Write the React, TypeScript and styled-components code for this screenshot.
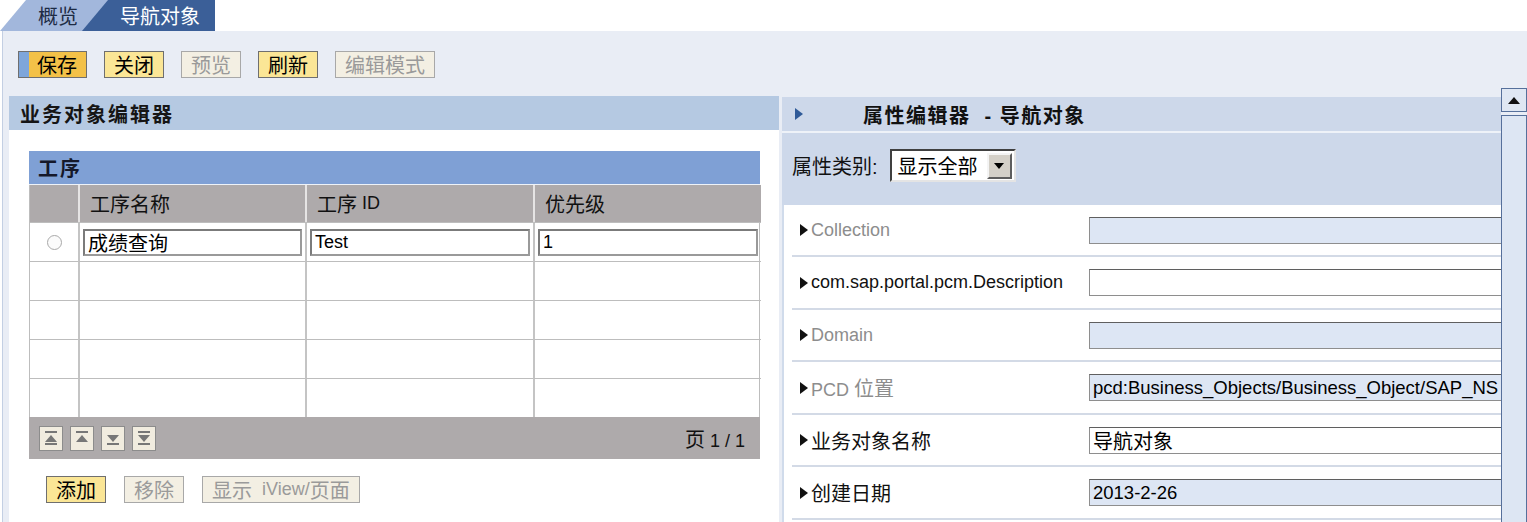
import React from 'react'
import styled, { createGlobalStyle, css } from 'styled-components'

const sans = `"Liberation Sans", "Noto Sans CJK SC", sans-serif`

const GlobalStyle = createGlobalStyle`
	html, body {
		margin: 0;
		padding: 0;
		background: #fff;
	}
	body {
		font-family: ${sans};
		color: #000;
	}
	* {
		box-sizing: border-box;
	}
`

// chinese glyphs in the original run a little wider than the latin text around them
const Han = styled.span`
	font-size: 20px;
`

const mixed = (text: string) =>
	text.split(/([\u4e00-\u9fff]+)/).map((part, i) =>
		/[\u4e00-\u9fff]/.test(part) ? <Han key={i}>{part}</Han> : part
	)

const Page = styled.div`
	width: 1527px;
	height: 522px;
	overflow: hidden;
	display: flex;
	flex-direction: column;
	background: #fff;
`

const TabBar = styled.div`
	display: flex;
	height: 31px;
	flex-shrink: 0;
`

const Tab = styled.div<{ $active?: boolean }>`
	height: 31px;
	display: flex;
	align-items: center;
	font-size: 20px;
	clip-path: polygon(26px 0, 100% 0, 100% 100%, 0 100%);
	${p =>
		p.$active
			? css`
					background: #3b5f98;
					color: #fff;
					margin-left: -26px;
					padding: 0 15px 0 38px;
			  `
			: css`
					background: #a2b7dc;
					color: #1d2b44;
					padding: 0 30px 0 38px;
			  `}
`

const Main = styled.div`
	flex: 1;
	min-height: 0;
	display: flex;
	flex-direction: column;
	margin-left: 2px;
	border-left: 1px solid #c3cfe3;
	background: #e9edf5;
`

const Toolbar = styled.div`
	height: 57px;
	flex-shrink: 0;
	display: flex;
	align-items: flex-start;
	gap: 17px;
	padding: 20px 0 0 15px;
`

type Variant = 'primary' | 'normal' | 'disabled'

const Btn = styled.div<{ $variant: Variant }>`
	height: 27px;
	display: flex;
	align-items: center;
	padding: 0 9px;
	font-size: 18px;
	white-space: pre;
	border: 1px solid #6f6f6f;
	color: #000;
	background: #fbe696;
	${p =>
		p.$variant === 'primary' &&
		css`
			padding: 0 9px 0 18px;
			background: linear-gradient(to right, #7ea6da 0 10px, #f3c148 10px);
		`}
	${p =>
		p.$variant === 'disabled' &&
		css`
			border-color: #a8a8a8;
			background: #f3efe3;
			color: #9a9a9a;
		`}
`

const Columns = styled.div`
	flex: 1;
	min-height: 0;
	display: flex;
	align-items: stretch;
	gap: 3px;
	padding-left: 6px;
`

const LeftPanel = styled.div`
	width: 770px;
	flex-shrink: 0;
	margin-top: 8px;
	display: flex;
	flex-direction: column;
	background: #fff;
`

const PanelHeader = styled.div`
	height: 34px;
	flex-shrink: 0;
	display: flex;
	align-items: center;
	padding-left: 11px;
	background: #b5c9e2;
	font-size: 20px;
	letter-spacing: 2px;
	font-weight: bold;
	color: #151515;
`

const PanelBody = styled.div`
	padding: 21px 19px 0 20px;
`

const Table = styled.div`
	width: 731px;
	display: flex;
	flex-direction: column;
`

const TableTitle = styled.div`
	height: 34px;
	display: flex;
	align-items: center;
	padding-left: 9px;
	background: #7fa0d5;
	border-bottom: 1px solid #eef2f8;
	font-size: 20px;
	letter-spacing: 2px;
	font-weight: bold;
	color: #15182a;
`

const Grid = styled.div`
	display: grid;
	grid-template-columns: 48px 227px 228px 228px;
	border-left: 1px solid #bdbdbd;
	border-right: 1px solid #bdbdbd;
`

const HeadCell = styled.div<{ $first?: boolean }>`
	height: 37px;
	display: flex;
	align-items: center;
	padding-left: 10px;
	background: #aeaaab;
	font-size: 18px;
	white-space: pre;
	color: #111;
	${p => !p.$first && 'border-left: 2px solid #e6e4e4;'}
`

const BodyCell = styled.div<{ $first?: boolean }>`
	height: 39px;
	display: flex;
	align-items: center;
	justify-content: ${p => (p.$first ? 'center' : 'stretch')};
	padding: 0 3px;
	border-top: 1px solid #bdbdbd;
	${p => !p.$first && 'border-left: 2px solid #c4c4c4;'}
`

const Radio = styled.span`
	width: 15px;
	height: 15px;
	border-radius: 50%;
	border: 1px solid #a9a9a9;
	background: #fbfbfb;
`

const CellInput = styled.div`
	flex: 1;
	height: 27px;
	display: flex;
	align-items: center;
	padding-left: 3px;
	border: 2px solid #7b7b7b;
	border-bottom-color: #9a9a9a;
	border-right-color: #9a9a9a;
	background: #fff;
	font-size: 18px;
	white-space: nowrap;
`

const TableFooter = styled.div`
	height: 42px;
	display: flex;
	align-items: center;
	justify-content: space-between;
	padding: 0 15px 0 10px;
	background: #aeaaab;
	font-size: 18px;
	color: #111;
`

const NavGroup = styled.div`
	display: flex;
	gap: 7px;
`

const NavBtn = styled.div`
	width: 24px;
	height: 25px;
	display: flex;
	align-items: center;
	justify-content: center;
	border: 1px solid #8c8c8c;
	background: #f1ecdf;
`

const ButtonRow = styled.div`
	display: flex;
	gap: 18px;
	margin-top: 17px;
	padding-left: 17px;
`

const RightColumn = styled.div`
	flex: 1;
	min-width: 0;
	display: flex;
`

const RightContent = styled.div`
	flex: 1;
	min-width: 0;
	overflow: hidden;
	display: flex;
	flex-direction: column;
	padding-top: 9px;
`

const PropHeader = styled.div`
	height: 36px;
	flex-shrink: 0;
	display: flex;
	align-items: center;
	padding-left: 13px;
	background: #cdd8ea;
	border-bottom: 2px solid #eef2f8;
	font-size: 20px;
	font-weight: bold;
	color: #111;
`

const PropTitle = styled.span`
	margin-left: 60px;
	letter-spacing: 1.5px;
	white-space: pre;
`

const FilterBar = styled.div`
	height: 72px;
	flex-shrink: 0;
	display: flex;
	align-items: flex-start;
	gap: 12px;
	padding: 16px 10px 0;
	background: #cdd8ea;
`

const FilterLabel = styled.span`
	height: 33px;
	display: flex;
	align-items: center;
	font-size: 20px;
	color: #111;
`

const Select = styled.div`
	width: 126px;
	height: 33px;
	display: flex;
	align-items: center;
	justify-content: space-between;
	padding: 0 2px 0 6px;
	border: 2px solid;
	border-color: #404040 #e4e4e4 #e4e4e4 #404040;
	background: #fff;
	font-size: 20px;
`

const SelectArrow = styled.span`
	width: 25px;
	height: 26px;
	display: flex;
	align-items: center;
	justify-content: center;
	background: #d4d0c8;
	border: 2px solid;
	border-color: #f4f4f4 #5e5e5e #5e5e5e #f4f4f4;
`

const PropList = styled.div`
	flex: 1;
	background: #fff;
	border-left: 2px solid #d0dbeb;
	padding-left: 8px;
`

const PropRow = styled.div`
	height: 52px;
	display: flex;
	align-items: center;
	border-bottom: 2px solid #d3dae6;

	&:nth-child(even) {
		height: 53px;
	}
`

const PropLabel = styled.div<{ $disabled?: boolean }>`
	width: 297px;
	flex-shrink: 0;
	display: flex;
	align-items: center;
	gap: 3px;
	padding-left: 8px;
	font-size: 18px;
	white-space: pre;
	color: ${p => (p.$disabled ? '#8d8d8d' : '#111')};
`

const PropInput = styled.div<{ $disabled?: boolean }>`
	width: 470px;
	flex-shrink: 0;
	height: 27px;
	display: flex;
	align-items: center;
	padding-left: 3px;
	border: 1px solid #8e8e8e;
	border-top-color: #5f5f5f;
	background: ${p => (p.$disabled ? '#dde6f4' : '#fff')};
	font-size: 18.5px;
	white-space: nowrap;
	overflow: hidden;
`

const ScrollBar = styled.div`
	width: 26px;
	flex-shrink: 0;
	display: flex;
	flex-direction: column;
	gap: 3px;
`

const ScrollUp = styled.div`
	height: 24px;
	display: flex;
	align-items: center;
	justify-content: center;
	border: 1px solid #56709b;
	background: #dfe7f3;
`

const ScrollThumb = styled.div`
	flex: 1;
	border: 1px solid #56709b;
	border-bottom: none;
	background: #dde6f3;
`

const Marker = ({ color = '#111' }: { color?: string }) => (
	<svg width="8" height="12" viewBox="0 0 8 12">
		<polygon points="0,0 8,6 0,12" fill={color} />
	</svg>
)

const NavIcon = ({ kind }: { kind: 'first' | 'prev' | 'next' | 'last' }) => {
	const c = '#777'
	return (
		<svg width="14" height="16" viewBox="0 0 14 16">
			{(kind === 'first' || kind === 'prev' || kind === 'last') && (
				<rect x="1" y="1" width="12" height="2" fill={c} />
			)}
			{(kind === 'first' || kind === 'prev') && (
				<polygon points="7,5 13,12 1,12" fill={c} />
			)}
			{(kind === 'next' || kind === 'last') && (
				<polygon points="1,5 13,5 7,12" fill={c} />
			)}
			{(kind === 'first' || kind === 'next' || kind === 'last') && (
				<rect x="1" y="13" width="12" height="2" fill={c} />
			)}
		</svg>
	)
}

const props = [
	{ label: 'Collection', disabled: true, value: '', inputDisabled: true },
	{ label: 'com.sap.portal.pcm.Description', disabled: false, value: '', inputDisabled: false },
	{ label: 'Domain', disabled: true, value: '', inputDisabled: true },
	{
		label: 'PCD 位置',
		disabled: true,
		value: 'pcd:Business_Objects/Business_Object/SAP_NS',
		inputDisabled: true,
	},
	{ label: '业务对象名称', disabled: false, value: '导航对象', inputDisabled: false },
	{ label: '创建日期', disabled: false, value: '2013-2-26', inputDisabled: true },
]

const App = () => (
	<Page>
		<GlobalStyle />
		<TabBar>
			<Tab>概览</Tab>
			<Tab $active>导航对象</Tab>
		</TabBar>
		<Main>
			<Toolbar>
				<Btn $variant="primary">{mixed('保存')}</Btn>
				<Btn $variant="normal">{mixed('关闭')}</Btn>
				<Btn $variant="disabled">{mixed('预览')}</Btn>
				<Btn $variant="normal">{mixed('刷新')}</Btn>
				<Btn $variant="disabled">{mixed('编辑模式')}</Btn>
			</Toolbar>
			<Columns>
				<LeftPanel>
					<PanelHeader>业务对象编辑器</PanelHeader>
					<PanelBody>
						<Table>
							<TableTitle>工序</TableTitle>
							<Grid>
								<HeadCell $first />
								<HeadCell>{mixed('工序名称')}</HeadCell>
								<HeadCell>{mixed('工序 ID')}</HeadCell>
								<HeadCell>{mixed('优先级')}</HeadCell>
								<BodyCell $first>
									<Radio />
								</BodyCell>
								<BodyCell>
									<CellInput>{mixed('成绩查询')}</CellInput>
								</BodyCell>
								<BodyCell>
									<CellInput>Test</CellInput>
								</BodyCell>
								<BodyCell>
									<CellInput>1</CellInput>
								</BodyCell>
								{Array.from({ length: 4 }).map((_, r) => (
									<React.Fragment key={r}>
										<BodyCell $first />
										<BodyCell />
										<BodyCell />
										<BodyCell />
									</React.Fragment>
								))}
							</Grid>
							<TableFooter>
								<NavGroup>
									<NavBtn>
										<NavIcon kind="first" />
									</NavBtn>
									<NavBtn>
										<NavIcon kind="prev" />
									</NavBtn>
									<NavBtn>
										<NavIcon kind="next" />
									</NavBtn>
									<NavBtn>
										<NavIcon kind="last" />
									</NavBtn>
								</NavGroup>
								<span>{mixed('页 1 / 1')}</span>
							</TableFooter>
						</Table>
						<ButtonRow>
							<Btn $variant="normal">{mixed('添加')}</Btn>
							<Btn $variant="disabled">{mixed('移除')}</Btn>
							<Btn $variant="disabled">{mixed('显示  iView/页面')}</Btn>
						</ButtonRow>
					</PanelBody>
				</LeftPanel>
				<RightColumn>
					<RightContent>
						<PropHeader>
							<Marker color="#2f5a98" />
							<PropTitle>属性编辑器  - 导航对象</PropTitle>
						</PropHeader>
						<FilterBar>
							<FilterLabel>属性类别:</FilterLabel>
							<Select>
								<span>显示全部</span>
								<SelectArrow>
									<svg width="10" height="6" viewBox="0 0 10 6">
										<polygon points="0,0 10,0 5,6" fill="#000" />
									</svg>
								</SelectArrow>
							</Select>
						</FilterBar>
						<PropList>
							{props.map(p => (
								<PropRow key={p.label}>
									<PropLabel $disabled={p.disabled}>
										<Marker />
										<span>{mixed(p.label)}</span>
									</PropLabel>
									<PropInput $disabled={p.inputDisabled}>{mixed(p.value)}</PropInput>
								</PropRow>
							))}
						</PropList>
					</RightContent>
					<ScrollBar>
						<ScrollUp>
							<svg width="12" height="7" viewBox="0 0 12 7">
								<polygon points="6,0 12,7 0,7" fill="#111" />
							</svg>
						</ScrollUp>
						<ScrollThumb />
					</ScrollBar>
				</RightColumn>
			</Columns>
		</Main>
	</Page>
)

export default App
